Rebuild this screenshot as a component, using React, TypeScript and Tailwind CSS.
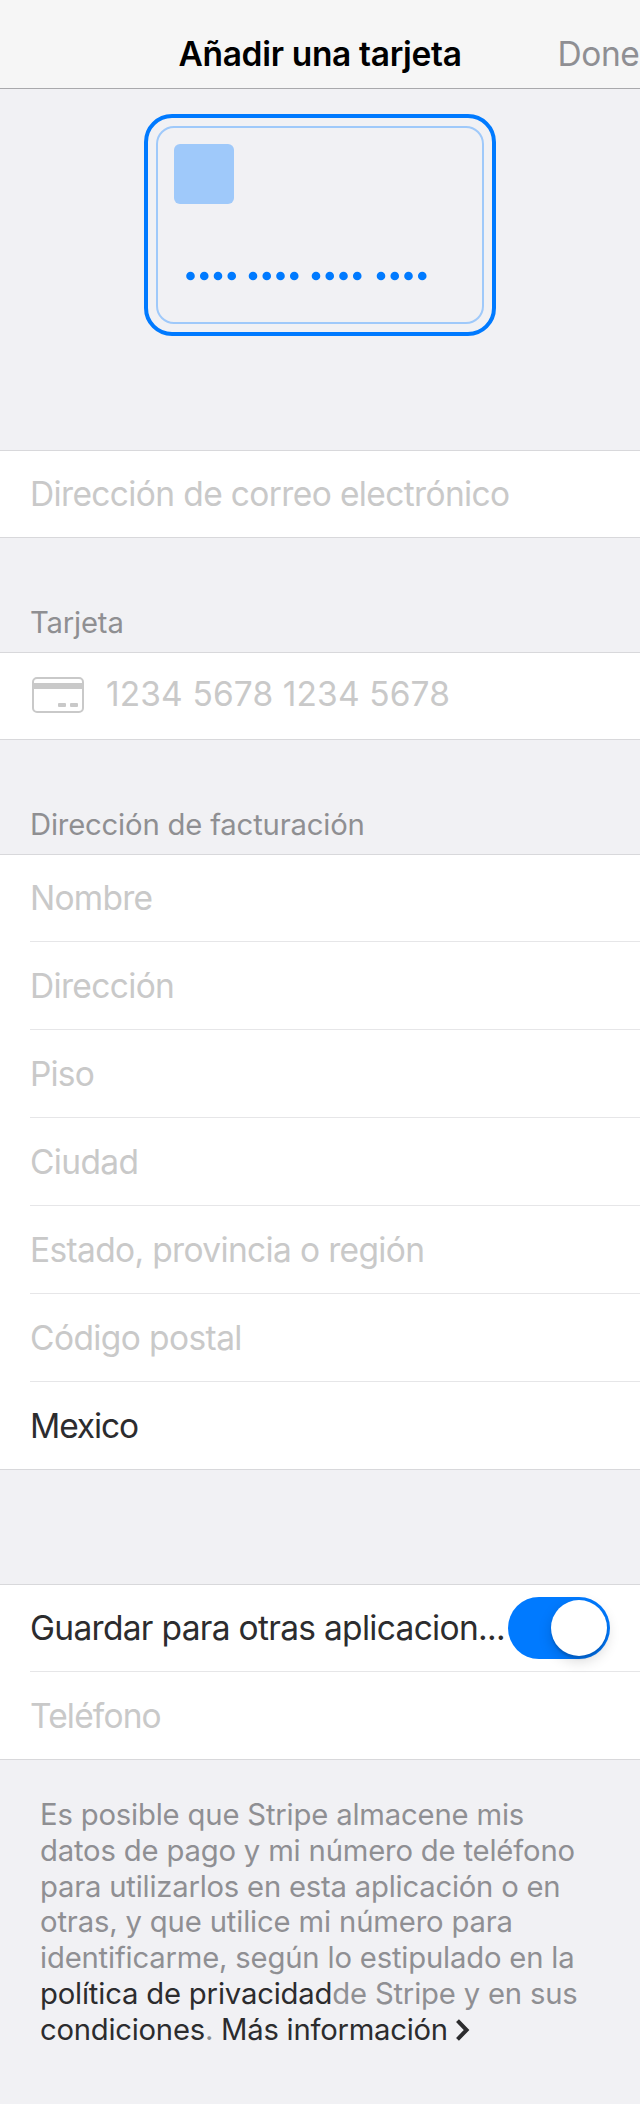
import type { ReactNode } from "react";

const placeholder = "text-[#c9c9c9]";
const ink = "text-[#2c2c2e]";

const addressFields = [
  { label: "Nombre", style: "text-[#c9c9c9] tracking-[-0.75px]" },
  { label: "Dirección", style: "text-[#c9c9c9] tracking-[-0.66px]" },
  { label: "Piso", style: "text-[#c9c9c9] tracking-[-0.85px]" },
  { label: "Ciudad", style: "text-[#c9c9c9] tracking-[-0.66px]" },
  { label: "Estado, provincia o región", style: "text-[#c9c9c9] tracking-[-0.65px]" },
  { label: "Código postal", style: "text-[#c9c9c9] tracking-[-0.59px]" },
  { label: "Mexico", style: "text-[#2c2c2e] tracking-[-1.1px]" },
];

function Panel({ children }: { children: ReactNode }) {
  return <section className="border-y border-[#d8d8db] bg-white">{children}</section>;
}

function SectionTitle({ children }: { children: ReactNode }) {
  return (
    <h2 className="flex h-[114px] items-end pb-[11px] pl-[30px] text-[29.25px] leading-9 tracking-[-0.18px] text-[#8f8f92]">
      {children}
    </h2>
  );
}

function CardArt() {
  return (
    <svg className="block" width="352" height="222" viewBox="0 0 352 222" fill="none">
      <rect x="2" y="2" width="348" height="218" rx="26" stroke="#007aff" strokeWidth="4" />
      <rect x="13" y="13" width="326" height="196" rx="17" stroke="#9fc9fa" strokeWidth="2" />
      <rect x="30" y="30" width="60" height="60" rx="6" fill="#9fc9fa" />
      {[46.5, 109, 172, 237].map((start) =>
        [0, 1, 2, 3].map((n) => (
          <circle key={`${start}-${n}`} cx={start + n * 13.75} cy="162" r="4.3" fill="#007aff" />
        )),
      )}
    </svg>
  );
}

function CardIcon() {
  return (
    <svg className="block shrink-0" width="52" height="36" viewBox="0 0 52 36" fill="none">
      <rect x="1" y="1" width="50" height="34" rx="4" stroke="#c9c9c9" strokeWidth="2" />
      <rect x="1" y="6" width="50" height="6" fill="#c9c9c9" />
      <rect x="26" y="26" width="8" height="4" rx="1" fill="#c9c9c9" />
      <rect x="38" y="26" width="8" height="4" rx="1" fill="#c9c9c9" />
    </svg>
  );
}

function Toggle() {
  return (
    <button
      type="button"
      role="switch"
      aria-checked="true"
      className="flex h-[62px] w-[102px] shrink-0 items-center justify-end rounded-full bg-[#007aff] pr-[3px]"
    >
      <span className="size-14 rounded-full bg-white shadow-[0_5px_14px_rgba(0,0,0,0.16),0_3px_2px_rgba(0,0,0,0.14)]" />
    </button>
  );
}

export default function App() {
  return (
    <main className="min-h-[2104px] w-[640px] overflow-hidden bg-[#f1f1f4] font-[Inter,sans-serif] text-[33.5px] leading-10 whitespace-nowrap">
      <header className="flex h-[89px] items-center border-b border-[#a9a9ac] bg-[#f6f6f6] pt-5 pl-[178.5px]">
        <h1 className="w-[379px] font-semibold tracking-[-0.33px] text-black">Añadir una tarjeta</h1>
        <button type="button" className="tracking-[-0.42px] text-[#8f8f93]">Done</button>
      </header>

      <div className="flex h-[361px] justify-center pt-[25px]">
        <CardArt />
      </div>

      <Panel>
        <div className={`flex h-[86px] items-center pl-[30px] tracking-[-0.63px] ${placeholder}`}>
          Dirección de correo electrónico
        </div>
      </Panel>

      <SectionTitle>Tarjeta</SectionTitle>
      <Panel>
        <div className={`flex h-[86px] items-center gap-[22px] pb-[2px] pl-8 tracking-[0.12px] ${placeholder}`}>
          <CardIcon />
          <span className="-mt-[2px]">1234 5678 1234 5678</span>
        </div>
      </Panel>

      <SectionTitle>Dirección de facturación</SectionTitle>
      <Panel>
        {addressFields.map((field, i) => (
          <div key={field.label} className="pl-[30px]">
            <div
              className={`flex items-center border-[#e6e6e8] ${i === 0 || i === 6 ? "h-[87px]" : "h-[88px]"} ${i === 6 ? "" : "border-b"} ${field.style}`}
            >
              {field.label}
            </div>
          </div>
        ))}
      </Panel>

      <div className="h-[114px]" />

      <Panel>
        <div className="pl-[30px]">
          <div className={`flex h-[87px] items-center justify-between border-b border-[#e6e6e8] pr-[30px] tracking-[-0.69px] ${ink}`}>
            <span>Guardar para otras aplicacion...</span>
            <Toggle />
          </div>
          <div className={`flex h-[87px] items-center tracking-[-0.84px] ${placeholder}`}>Teléfono</div>
        </div>
      </Panel>

      <footer className="pt-[37px] pl-10 text-[29.25px] leading-[35.8px] text-[#8f8f93]">
        <p className="tracking-[-0.177px]">Es posible que Stripe almacene mis</p>
        <p className="tracking-[-0.179px]">datos de pago y mi número de teléfono</p>
        <p className="tracking-[-0.215px]">para utilizarlos en esta aplicación o en</p>
        <p className="tracking-[-0.159px]">otras, y que utilice mi número para</p>
        <p className="tracking-[-0.183px]">identificarme, según lo estipulado en la</p>
        <p className="tracking-[-0.186px]">
          <a className={ink}>política de privacidad</a>de Stripe y en sus
        </p>
        <p className="flex items-center tracking-[-0.25px]">
          <span className={ink}>condiciones</span>
          <span className="whitespace-pre">. </span>
          <a className={`flex items-center gap-2 ${ink}`}>
            Más información
            <svg className="mt-px" width="14" height="22" viewBox="0 0 14 22" fill="none">
              <path d="M1.5 1.6 10.6 11l-9.1 9.4" stroke="#2c2c2e" strokeWidth="4" />
            </svg>
          </a>
        </p>
      </footer>
    </main>
  );
}
